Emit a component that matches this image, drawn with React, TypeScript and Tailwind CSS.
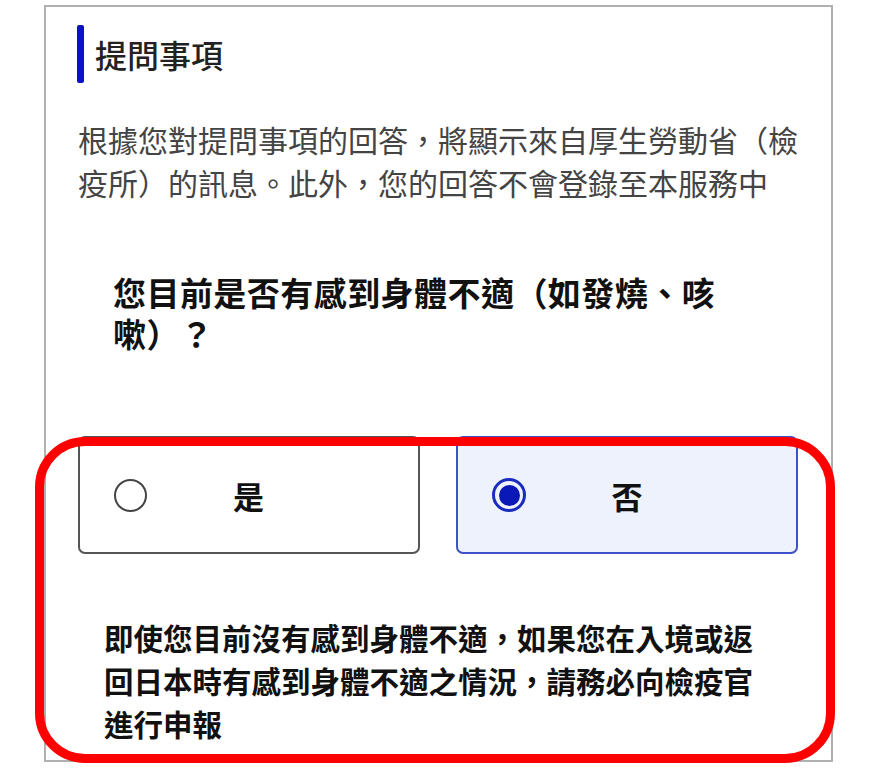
import React from "react";

const font = { fontFamily: '"Noto Sans CJK TC", "Noto Sans", sans-serif' };

function Radio({ selected }: { selected: boolean }) {
  if (selected) {
    return (
      <span className="flex h-[34px] w-[34px] shrink-0 items-center justify-center rounded-full border-[3px] border-[#1a2bc0]">
        <span className="h-[21px] w-[21px] rounded-full bg-[#0a18b8]" />
      </span>
    );
  }
  return <span className="h-[33px] w-[33px] shrink-0 rounded-full border-2 border-[#444]" />;
}

function Option({ label, selected }: { label: string; selected: boolean }) {
  return (
    <div
      className={
        "flex h-[118px] w-[342px] items-center rounded-[7px] border-2 px-[34px] " +
        (selected ? "border-[#3f51c8] bg-[#eef2fc]" : "border-[#555] bg-white")
      }
    >
      <Radio selected={selected} />
      <span className="flex-1 text-center text-[31px] font-bold leading-none text-[#111]">{label}</span>
      <span className="w-[34px] shrink-0" />
    </div>
  );
}

export default function App() {
  return (
    <div className="relative h-[774px] w-[869px] overflow-hidden bg-white pl-[44px] pt-[5px]" style={font}>
      <div className="h-[757px] w-[789px] border-2 border-[#b0b0b0] bg-white pl-[31px] pt-[18px]">
        <div className="flex items-center gap-[11px]">
          <div className="h-[58px] w-[7px] rounded-[2px] bg-[#0a12c4]" />
          <div className="text-[32px] font-medium leading-none text-[#222]">提問事項</div>
        </div>
        <p className="ml-[1px] mt-[35px] w-[730px] text-[30px] leading-[43px] text-[#444]">
          根據您對提問事項的回答，將顯示來自厚生勞動省（檢疫所）的訊息。此外，您的回答不會登錄至本服務中
        </p>
        <p className="ml-[36px] mt-[68px] w-[618px] text-[33px] font-bold leading-[41px] tracking-[0.45px] text-[#111]">
          您目前是否有感到身體不適（如發燒、咳嗽）？
        </p>
        <div className="ml-[1px] mt-[82px] flex gap-[36px]">
          <Option label="是" selected={false} />
          <Option label="否" selected={true} />
        </div>
        <p className="ml-[27px] mt-[62px] w-[665px] text-[29.5px] font-bold leading-[43px] text-[#111]">
          即使您目前沒有感到身體不適，如果您在入境或返回日本時有感到身體不適之情況，請務必向檢疫官進行申報
        </p>
      </div>
      <div className="pointer-events-none absolute left-[35px] top-[437px] h-[326px] w-[800px] rounded-[50px] border-[9px] border-[#ff0000]" />
    </div>
  );
}
